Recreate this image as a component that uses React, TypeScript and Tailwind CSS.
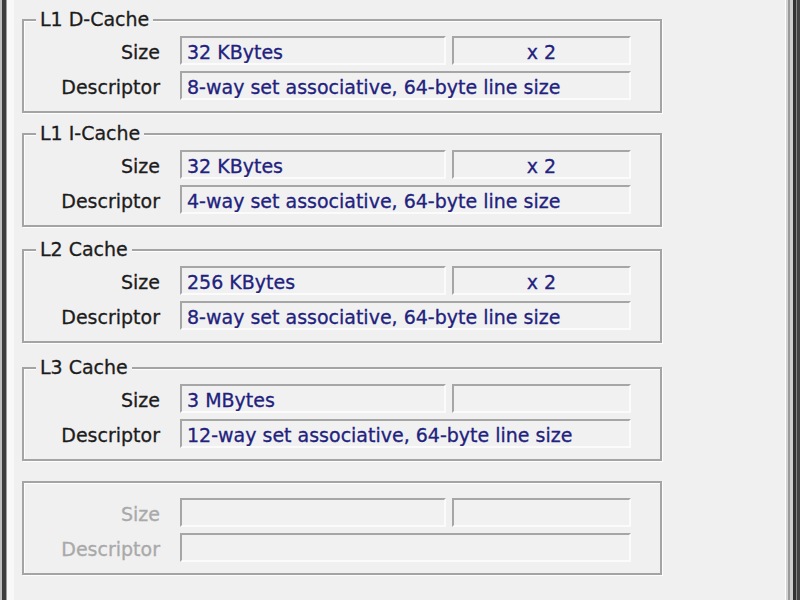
import React from 'react';

type CacheInfo = {
    title?: string;
    size?: string;
    count?: string;
    descriptor?: string;
    className: string;
    disabled?: boolean;
};

const caches: CacheInfo[] = [
    { title: 'L1 D-Cache', size: '32 KBytes', count: 'x 2', descriptor: '8-way set associative, 64-byte line size', className: 'mt-[19px]' },
    { title: 'L1 I-Cache', size: '32 KBytes', count: 'x 2', descriptor: '4-way set associative, 64-byte line size', className: 'mt-[20px]' },
    { title: 'L2 Cache', size: '256 KBytes', count: 'x 2', descriptor: '8-way set associative, 64-byte line size', className: 'mt-[22px]' },
    { title: 'L3 Cache', size: '3 MBytes', count: '', descriptor: '12-way set associative, 64-byte line size', className: 'mt-[24px]' },
    { className: 'mt-[20px]', disabled: true },
];

const Field = ({ text, className, center }: { text?: string; className: string; center?: boolean }) => (
    <div
        className={`h-[29px] border-t-2 border-l-2 border-b-2 border-r-2 border-t-[#a6a6a6] border-l-[#a6a6a6] border-b-[#fbfbfb] border-r-[#fbfbfb] bg-[#f1f1f1] pt-[4px] leading-[20px] text-[#22227e] whitespace-nowrap overflow-hidden ${center ? 'text-center' : 'pl-[5px]'} ${className}`}
    >
        {text}
    </div>
);

const CacheGroup = ({ info }: { info: CacheInfo }) => {
    const labelColor = info.disabled ? 'text-[#a9a9a9]' : 'text-[#1c1c1c]';
    return (
        <div className={`relative w-[640px] h-[94px] border-2 border-[#a4a4a4] shadow-[inset_1px_1px_0_#fdfdfd,1px_1px_0_#fdfdfd] pt-[15px] ${info.className}`}>
            {info.title && (
                <div className="absolute top-[-12px] left-[12px] px-[4px] bg-[#f0f0f0] leading-[20px] text-[#1c1c1c]">
                    {info.title}
                </div>
            )}
            <div className="flex flex-col gap-[6px]">
                <div className="flex">
                    <div className={`w-[136px] h-[29px] pt-[6px] leading-[20px] text-right ${labelColor}`}>Size</div>
                    <Field text={info.size} className="ml-[20px] w-[266px]" />
                    <Field text={info.count} center className="ml-[6px] w-[179px]" />
                </div>
                <div className="flex">
                    <div className={`w-[136px] h-[29px] pt-[6px] leading-[20px] text-right ${labelColor}`}>Descriptor</div>
                    <Field text={info.descriptor} className="ml-[20px] w-[451px]" />
                </div>
            </div>
        </div>
    );
};

const App = () => {
    return (
        <div className="w-[800px] h-[600px] flex overflow-hidden bg-[#f0f0f0] text-[19px] font-['DejaVu_Sans',sans-serif] [-webkit-text-stroke:0.3px_currentColor]">
            {/* window frame, left */}
            <div className="flex h-full shrink-0">
                <div className="w-[2px] bg-[#bdbdbd]" />
                <div className="w-[4px] bg-[#3c3c3c]" />
                <div className="w-[1px] bg-[#9e9e9e]" />
                <div className="w-[7px] bg-[#f8f8f8]" />
            </div>

            <div className="w-[771px] shrink-0 pl-[8px] flex flex-col">
                {caches.map((c, i) => (
                    <CacheGroup key={i} info={c} />
                ))}
            </div>

            {/* window frame, right */}
            <div className="flex h-full shrink-0">
                <div className="w-[1px] bg-white" />
                <div className="w-[2px] bg-[#d4d4d4]" />
                <div className="w-[2px] bg-[#9a9a9a]" />
                <div className="w-[3px] bg-[#cfcfcf]" />
                <div className="w-[3px] bg-[#333333]" />
                <div className="w-[1px] bg-[#888888]" />
                <div className="w-[3px] bg-[#444444]" />
            </div>
        </div>
    );
};

export default App;
